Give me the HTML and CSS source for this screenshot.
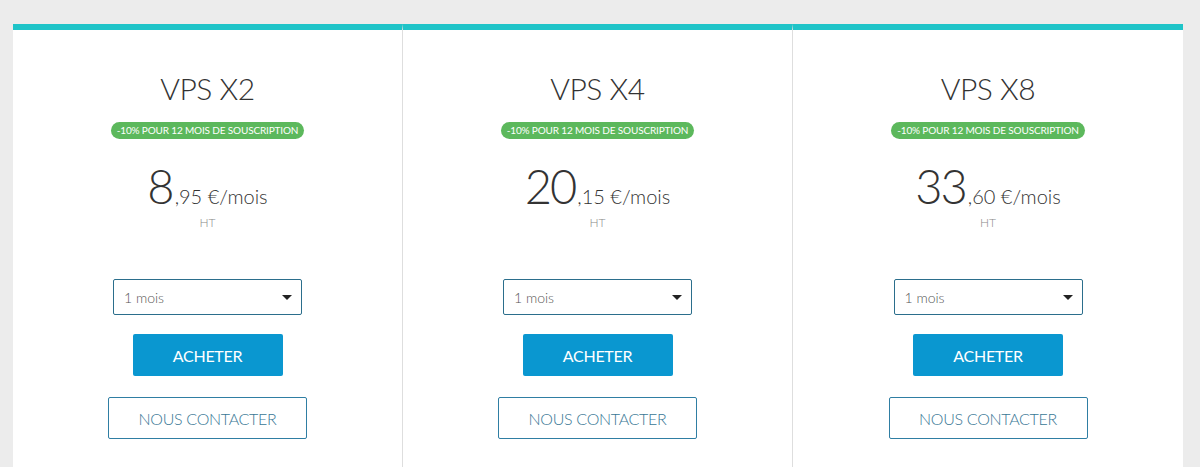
FILE: index.html
```html
<!DOCTYPE html>
<html lang="fr">
<head>
  <meta charset="UTF-8">
  <meta name="viewport" content="width=device-width, initial-scale=1.0">
  <title>Offres VPS</title>
  <link rel="stylesheet" href="styles.css">
</head>
<body>
  <div class="plans">
    <div class="plan">
      <h2 class="plan-name">VPS X2</h2>
      <span class="promo">-10% pour 12 mois de souscription</span>
      <div class="price"><span class="price-int">8</span><span class="price-dec">,95 €/mois</span></div>
      <div class="tax">HT</div>
      <div class="select-box">
        <span>1 mois</span>
        <span class="caret"></span>
      </div>
      <button class="btn-buy">Acheter</button>
      <button class="btn-contact">Nous contacter</button>
    </div>
    <div class="plan">
      <h2 class="plan-name">VPS X4</h2>
      <span class="promo">-10% pour 12 mois de souscription</span>
      <div class="price"><span class="price-int">20</span><span class="price-dec">,15 €/mois</span></div>
      <div class="tax">HT</div>
      <div class="select-box">
        <span>1 mois</span>
        <span class="caret"></span>
      </div>
      <button class="btn-buy">Acheter</button>
      <button class="btn-contact">Nous contacter</button>
    </div>
    <div class="plan">
      <h2 class="plan-name">VPS X8</h2>
      <span class="promo">-10% pour 12 mois de souscription</span>
      <div class="price"><span class="price-int">33</span><span class="price-dec">,60 €/mois</span></div>
      <div class="tax">HT</div>
      <div class="select-box">
        <span>1 mois</span>
        <span class="caret"></span>
      </div>
      <button class="btn-buy">Acheter</button>
      <button class="btn-contact">Nous contacter</button>
    </div>
  </div>
</body>
</html>
```

FILE: styles.css
```css
/* General Styles */
* {
  margin: 0;
  padding: 0;
  box-sizing: border-box;
  font-family: 'Lato', 'Open Sans', sans-serif;
}

body {
  background: #ececec;
  padding: 24px 17px 0 13px;
  height: 467px;
  overflow: hidden;
}

/* Plans */
.plans {
  display: grid;
  grid-template-columns: 390px 390px 390px;
  height: 443px;
}

.plan {
  background: white;
  border-top: 6px solid #1fc4c8;
  border-right: 1px solid #dedede;
  display: flex;
  flex-direction: column;
  align-items: center;
  padding-top: 39px;
}

.plan:last-child {
  border-right: none;
}

.plan-name {
  font-size: 30px;
  font-weight: 300;
  color: #333;
  line-height: 38px;
  letter-spacing: -0.5px;
}

.promo {
  margin-top: 15px;
  background: #5cb85c;
  color: white;
  font-size: 10px;
  text-transform: uppercase;
  line-height: 17px;
  padding: 0 6px;
  border-radius: 9px;
  letter-spacing: -0.15px;
}

/* Price */
.price {
  margin-top: 22px;
  color: #333;
  font-weight: 300;
  display: flex;
  align-items: baseline;
}

.price-int {
  font-size: 47px;
  line-height: 50px;
  letter-spacing: -2px;
}

.price-dec {
  font-size: 20px;
  margin-left: 2px;
}

.tax {
  margin-top: 4px;
  font-size: 12px;
  color: #888;
  font-weight: 300;
}

/* Select */
.select-box {
  margin-top: 49px;
  width: 189px;
  height: 36px;
  border: 1px solid #2b6e8c;
  border-radius: 2px;
  display: flex;
  align-items: center;
  justify-content: space-between;
  padding: 0 9px 0 10px;
  font-size: 14px;
  color: #555;
  font-weight: 300;
}

.caret {
  width: 0;
  height: 0;
  border-left: 5px solid transparent;
  border-right: 5px solid transparent;
  border-top: 5px solid #222;
}

/* Buttons */
button {
  font-size: 16px;
  text-transform: uppercase;
  cursor: pointer;
  letter-spacing: -0.3px;
}

.btn-buy {
  margin-top: 19px;
  width: 150px;
  height: 42px;
  background: #0a97d0;
  color: white;
  border: none;
  border-radius: 2px;
}

.btn-contact {
  margin-top: 21px;
  width: 199px;
  height: 42px;
  background: white;
  color: #3a7896;
  border: 1px solid #2f7ea3;
  border-radius: 2px;
  font-weight: 300;
}
```
